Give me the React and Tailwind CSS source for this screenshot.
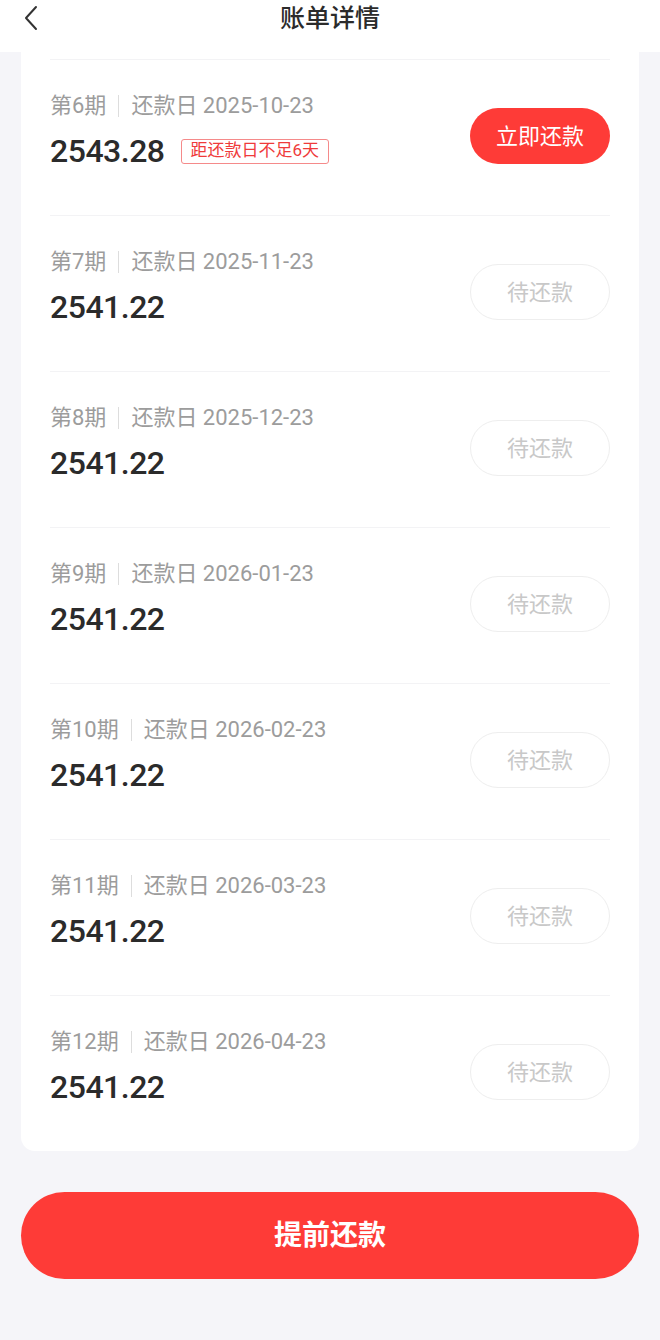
import React from "react";

const rows = [
  { period: "第6期", date: "2025-10-23", amount: "2543.28", current: true },
  { period: "第7期", date: "2025-11-23", amount: "2541.22" },
  { period: "第8期", date: "2025-12-23", amount: "2541.22" },
  { period: "第9期", date: "2026-01-23", amount: "2541.22" },
  { period: "第10期", date: "2026-02-23", amount: "2541.22" },
  { period: "第11期", date: "2026-03-23", amount: "2541.22" },
  { period: "第12期", date: "2026-04-23", amount: "2541.22" },
];

const font = { fontFamily: "Roboto, 'Noto Sans CJK SC', sans-serif" };

const Row = ({ row }) => (
  <div className="flex h-[156px] justify-between border-t border-[#f3f3f5]">
    <div className="pt-[33px]">
      <div className="flex items-center text-[22px] leading-[26px] text-[#9c9c9c]">
        <span>{row.period}</span>
        <span className="mx-[12px] h-[22px] w-px bg-[#dddddd]" />
        <span>还款日 {row.date}</span>
      </div>
      <div className="mt-[14px] flex items-center">
        <span className="text-[32px] font-medium leading-[36px] tracking-[-0.5px] text-[#2b2b2b]">
          {row.amount}
        </span>
        {row.current && (
          <span className="ml-[16px] flex h-[25px] items-center rounded-[3px] border border-[#f58a8a] px-[9px] text-[17px] text-[#ef3b3b]">
            距还款日不足6天
          </span>
        )}
      </div>
    </div>
    {row.current ? (
      <button className="mt-[48px] flex h-[56px] w-[140px] items-center justify-center rounded-full bg-[#fe3b37] text-[22px] text-white">
        立即还款
      </button>
    ) : (
      <button className="mt-[48px] flex h-[56px] w-[140px] items-center justify-center rounded-full border border-[#eeeeee] text-[22px] text-[#c8c8c8]">
        待还款
      </button>
    )}
  </div>
);

export default function App() {
  return (
    <div className="min-h-[1340px] bg-[#f5f5f9]" style={font}>
      <div className="relative flex h-[52px] justify-center bg-white">
        <svg className="absolute left-[22px] top-[5px]" width="18" height="26" viewBox="0 0 18 26" fill="none">
          <path d="M14 2 L4 13 L14 24" stroke="#333" strokeWidth="2" strokeLinecap="round" strokeLinejoin="round" />
        </svg>
        <h1 className="pt-[2px] text-[25px] font-medium leading-[34px] text-[#2b2b2b]">账单详情</h1>
      </div>
      <div className="mx-[21px] rounded-b-[14px] bg-white px-[29px] pt-[7px]">
        {rows.map((row) => (
          <Row key={row.period} row={row} />
        ))}
      </div>
      <div className="px-[21px] pt-[41px]">
        <button className="flex h-[87px] w-full items-center justify-center rounded-full bg-[#fe3b37] text-[28px] font-bold text-white">
          提前还款
        </button>
      </div>
    </div>
  );
}
